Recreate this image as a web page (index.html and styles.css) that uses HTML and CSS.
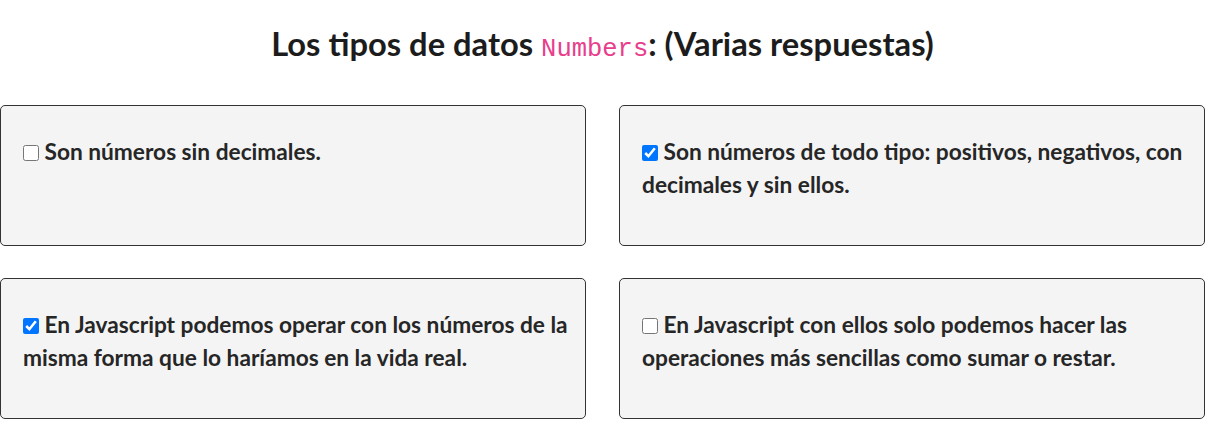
FILE: index.html
```html
<!DOCTYPE html>
<html lang="es">
<head>
<meta charset="utf-8">
<title>Numbers</title>
<link rel="stylesheet" href="styles.css">
</head>
<body>
<main class="quiz">
  <h1 class="title">Los tipos de datos <code class="code">Numbers</code>: (Varias respuestas)</h1>
  <div class="options">
    <label class="option"><span class="text"><input type="checkbox" class="check"> Son números sin decimales.</span></label>
    <label class="option"><span class="text"><input type="checkbox" class="check" checked> Son números de todo tipo: positivos, negativos, con decimales y sin ellos.</span></label>
    <label class="option"><span class="text"><input type="checkbox" class="check" checked> En Javascript podemos operar con los números de la misma forma que lo haríamos en la vida real.</span></label>
    <label class="option"><span class="text"><input type="checkbox" class="check"> En Javascript con ellos solo podemos hacer las operaciones más sencillas como sumar o restar.</span></label>
  </div>
</main>
</body>
</html>
```

FILE: styles.css
```css
* { box-sizing: border-box; }
html, body { margin: 0; padding: 0; background: #fff; }
body {
  font-family: Lato, "Noto Sans", sans-serif;
  color: #212529;
}
.quiz {
  width: 1205px;
  padding-top: 22px;
}
.title {
  margin: 0 0 33px;
  text-align: center;
  font-size: 32.7px;
  line-height: 44px;
  font-weight: 700;
  color: #1c1c1c;
}
.code {
  font-family: "Liberation Mono", "DejaVu Sans Mono", monospace;
  font-size: 25.5px;
  font-weight: 400;
  color: #e83e8c;
}
.options {
  display: grid;
  grid-template-columns: 1fr 1fr;
  column-gap: 33px;
  row-gap: 32px;
}
.option {
  display: block;
  min-height: 141px;
  padding: 29px 14px 29px 22px;
  background: #f4f4f4;
  border: 1px solid #333;
  border-radius: 5px;
  font-size: 22.7px;
  line-height: 33px;
  font-weight: 700;
  color: #262626;
}
.check {
  width: 16px;
  height: 16px;
  margin: 0;
  vertical-align: -1px;
}
```
